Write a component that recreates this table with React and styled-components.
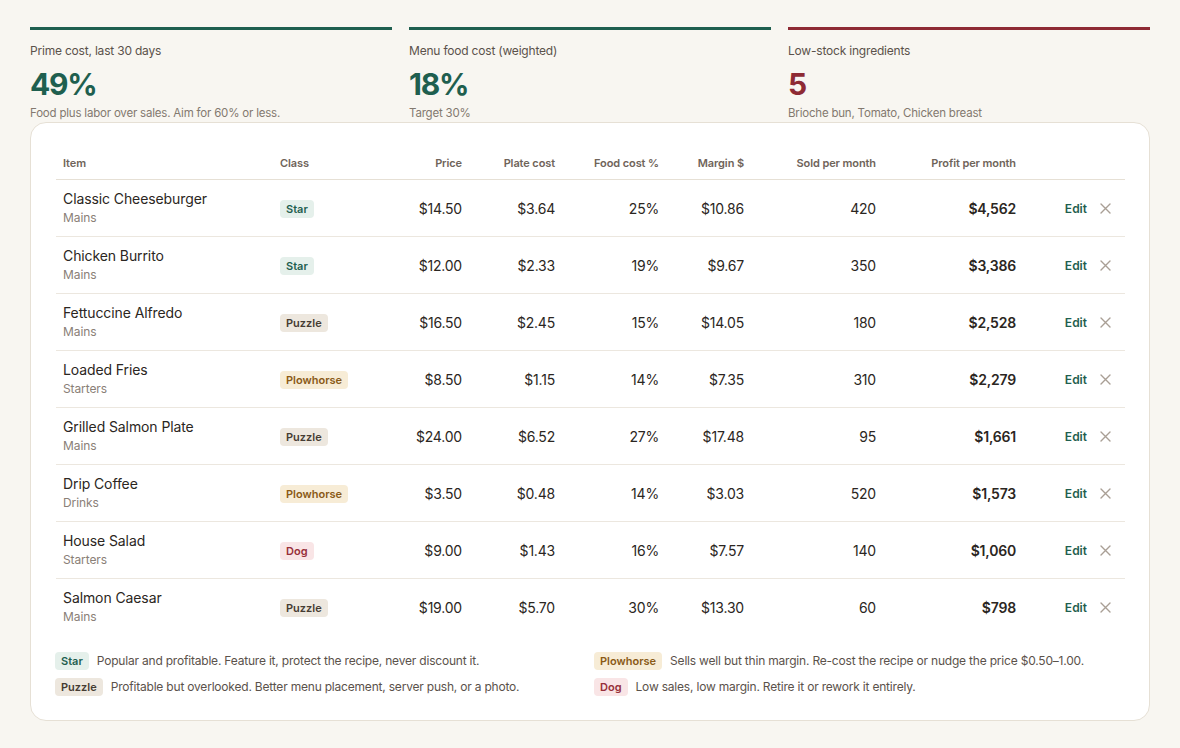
import React from "react";
import styled, { createGlobalStyle } from "styled-components";

const GlobalStyle = createGlobalStyle`
  body {
    margin: 0;
    background: #f8f6f1;
    font-family: Inter, "Noto Sans", Arial, sans-serif;
    color: #2b2622;
  }
`;

const stats = [
  { label: "Prime cost, last 30 days", value: "49%", note: "Food plus labor over sales. Aim for 60% or less.", tone: "green" },
  { label: "Menu food cost (weighted)", value: "18%", note: "Target 30%", tone: "green" },
  { label: "Low-stock ingredients", value: "5", note: "Brioche bun, Tomato, Chicken breast", tone: "red" },
];

const items = [
  { name: "Classic Cheeseburger", cat: "Mains", cls: "Star", price: "$14.50", plate: "$3.64", pct: "25%", margin: "$10.86", sold: 420, profit: "$4,562" },
  { name: "Chicken Burrito", cat: "Mains", cls: "Star", price: "$12.00", plate: "$2.33", pct: "19%", margin: "$9.67", sold: 350, profit: "$3,386" },
  { name: "Fettuccine Alfredo", cat: "Mains", cls: "Puzzle", price: "$16.50", plate: "$2.45", pct: "15%", margin: "$14.05", sold: 180, profit: "$2,528" },
  { name: "Loaded Fries", cat: "Starters", cls: "Plowhorse", price: "$8.50", plate: "$1.15", pct: "14%", margin: "$7.35", sold: 310, profit: "$2,279" },
  { name: "Grilled Salmon Plate", cat: "Mains", cls: "Puzzle", price: "$24.00", plate: "$6.52", pct: "27%", margin: "$17.48", sold: 95, profit: "$1,661" },
  { name: "Drip Coffee", cat: "Drinks", cls: "Plowhorse", price: "$3.50", plate: "$0.48", pct: "14%", margin: "$3.03", sold: 520, profit: "$1,573" },
  { name: "House Salad", cat: "Starters", cls: "Dog", price: "$9.00", plate: "$1.43", pct: "16%", margin: "$7.57", sold: 140, profit: "$1,060" },
  { name: "Salmon Caesar", cat: "Mains", cls: "Puzzle", price: "$19.00", plate: "$5.70", pct: "30%", margin: "$13.30", sold: 60, profit: "$798" },
];

const legend = [
  { cls: "Star", text: "Popular and profitable. Feature it, protect the recipe, never discount it." },
  { cls: "Plowhorse", text: "Sells well but thin margin. Re-cost the recipe or nudge the price $0.50–1.00." },
  { cls: "Puzzle", text: "Profitable but overlooked. Better menu placement, server push, or a photo." },
  { cls: "Dog", text: "Low sales, low margin. Retire it or rework it entirely." },
];

const toneColor = { green: "#1f5f4f", red: "#8e2a34" };

const badgeColors = {
  Star: { bg: "#e5f0eb", fg: "#1f5f4f" },
  Puzzle: { bg: "#ede7de", fg: "#463c33" },
  Plowhorse: { bg: "#f7ecd6", fg: "#8a5a16" },
  Dog: { bg: "#f9e5e6", fg: "#97303a" },
};

const Page = styled.div`
  padding: 27px 30px 28px;
`;

const StatRow = styled.div`
  display: grid;
  grid-template-columns: repeat(3, 1fr);
  gap: 17px;
`;

const Stat = styled.div`
  border-top: 3px solid ${(p) => toneColor[p.$tone]};
  padding-top: 13px;
`;

const StatLabel = styled.div`
  font-size: 12px;
  line-height: 16px;
  letter-spacing: -0.2px;
  color: #5b524b;
`;

const StatValue = styled.div`
  margin-top: 7px;
  font-size: 30px;
  line-height: 36px;
  font-weight: 700;
  letter-spacing: -1.2px;
  color: ${(p) => toneColor[p.$tone]};
`;

const StatNote = styled.div`
  margin-top: 3px;
  font-size: 11.5px;
  line-height: 16px;
  letter-spacing: -0.2px;
  color: #83796f;
`;

const Card = styled.div`
  margin-top: 1px;
  background: #fff;
  border: 1px solid #e6e0d5;
  border-radius: 16px;
  padding: 24px 24px 24px 25px;
`;

const cols = "1fr 100px 96px 93px 104px 85px 132px 140px 102px";

const HeadRow = styled.div`
  display: grid;
  grid-template-columns: ${cols};
  border-bottom: 1px solid #e6e0d5;
`;

const HeadCell = styled.div`
  padding: 8px 7px;
  font-size: 11px;
  line-height: 16px;
  font-weight: 600;
  letter-spacing: -0.1px;
  color: #6f645a;
  text-align: ${(p) => (p.$right ? "right" : "left")};
`;

const Body = styled.div``;

const Row = styled.div`
  display: grid;
  grid-template-columns: ${cols};
  align-items: center;
  height: 56px;
  border-bottom: 1px solid #ece7df;
  &:last-child {
    border-bottom: none;
  }
`;

const Cell = styled.div`
  padding: 0 7px;
  font-size: 14px;
  letter-spacing: -0.2px;
  color: #2b2622;
  text-align: ${(p) => (p.$right ? "right" : "left")};
  font-weight: ${(p) => (p.$bold ? 600 : 400)};
`;

const ItemName = styled.div`
  font-size: 14px;
  line-height: 18px;
  letter-spacing: -0.1px;
  color: #2b2622;
`;

const ItemCat = styled.div`
  margin-top: 2px;
  font-size: 12px;
  line-height: 16px;
  letter-spacing: -0.1px;
  color: #8a8077;
`;

const Badge = styled.span`
  display: inline-block;
  padding: 2px 6px;
  border-radius: 4px;
  font-size: 11px;
  line-height: 14px;
  font-weight: 600;
  letter-spacing: 0;
  background: ${(p) => badgeColors[p.$cls].bg};
  color: ${(p) => badgeColors[p.$cls].fg};
`;

const Actions = styled.div`
  display: flex;
  justify-content: flex-end;
  align-items: center;
  gap: 13px;
  padding: 0 14px 0 7px;
`;

const EditButton = styled.button`
  border: none;
  background: none;
  padding: 0;
  font: inherit;
  font-size: 12px;
  font-weight: 600;
  color: #1f5f4f;
  cursor: pointer;
`;

const RemoveButton = styled.button`
  border: none;
  background: none;
  padding: 0;
  display: flex;
  cursor: pointer;
`;

const Legend = styled.div`
  margin-top: 17px;
  display: grid;
  grid-template-columns: 1fr 1fr;
  column-gap: 8px;
  row-gap: 8px;
  margin-left: -1px;
`;

const LegendItem = styled.div`
  display: flex;
  align-items: center;
  gap: 8px;
  font-size: 12px;
  line-height: 18px;
  letter-spacing: -0.2px;
  color: #5b524b;
`;

const Cross = () => (
  <svg width="11" height="11" viewBox="0 0 11 11">
    <path d="M1 1 L10 10 M10 1 L1 10" stroke="#a99f95" strokeWidth="1.4" strokeLinecap="round" />
  </svg>
);

export default function App() {
  return (
    <Page>
      <GlobalStyle />
      <StatRow>
        {stats.map((s) => (
          <Stat key={s.label} $tone={s.tone}>
            <StatLabel>{s.label}</StatLabel>
            <StatValue $tone={s.tone}>{s.value}</StatValue>
            <StatNote>{s.note}</StatNote>
          </Stat>
        ))}
      </StatRow>

      <Card>
        <HeadRow>
          <HeadCell>Item</HeadCell>
          <HeadCell>Class</HeadCell>
          <HeadCell $right>Price</HeadCell>
          <HeadCell $right>Plate cost</HeadCell>
          <HeadCell $right>Food cost %</HeadCell>
          <HeadCell $right>Margin $</HeadCell>
          <HeadCell $right>Sold per month</HeadCell>
          <HeadCell $right>Profit per month</HeadCell>
          <HeadCell />
        </HeadRow>
        <Body>
          {items.map((it) => (
            <Row key={it.name}>
              <Cell>
                <ItemName>{it.name}</ItemName>
                <ItemCat>{it.cat}</ItemCat>
              </Cell>
              <Cell>
                <Badge $cls={it.cls}>{it.cls}</Badge>
              </Cell>
              <Cell $right>{it.price}</Cell>
              <Cell $right>{it.plate}</Cell>
              <Cell $right>{it.pct}</Cell>
              <Cell $right>{it.margin}</Cell>
              <Cell $right>{it.sold}</Cell>
              <Cell $right $bold>{it.profit}</Cell>
              <Actions>
                <EditButton>Edit</EditButton>
                <RemoveButton aria-label="Remove">
                  <Cross />
                </RemoveButton>
              </Actions>
            </Row>
          ))}
        </Body>
        <Legend>
          {legend.map((l) => (
            <LegendItem key={l.cls}>
              <Badge $cls={l.cls}>{l.cls}</Badge>
              {l.text}
            </LegendItem>
          ))}
        </Legend>
      </Card>
    </Page>
  );
}
